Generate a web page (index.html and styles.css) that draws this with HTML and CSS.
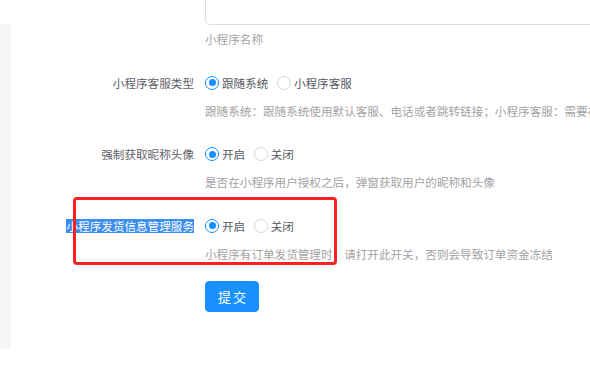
FILE: index.html
```html
<!DOCTYPE html>
<html lang="zh-CN">
<head>
<meta charset="utf-8">
<title>小程序设置</title>
<link rel="stylesheet" href="styles.css">
</head>
<body>
<div class="page">
  <div class="aside"></div>
  <form class="form">
    <div class="item item-input">
      <div class="label"></div>
      <div class="control">
        <div class="input"></div>
        <div class="desc">小程序名称</div>
      </div>
    </div>
    <div class="item">
      <div class="label">小程序客服类型</div>
      <div class="control">
        <div class="radios">
          <span class="radio checked"><span class="dot"></span>跟随系统</span>
          <span class="radio"><span class="dot"></span>小程序客服</span>
        </div>
        <div class="desc">跟随系统：跟随系统使用默认客服、电话或者跳转链接；小程序客服：需要在小程序后台配置客服人员</div>
      </div>
    </div>
    <div class="item">
      <div class="label">强制获取昵称头像</div>
      <div class="control">
        <div class="radios">
          <span class="radio checked"><span class="dot"></span>开启</span>
          <span class="radio"><span class="dot"></span>关闭</span>
        </div>
        <div class="desc">是否在小程序用户授权之后，弹窗获取用户的昵称和头像</div>
      </div>
    </div>
    <div class="item">
      <div class="label"><span class="selected">小程序发货信息管理服务</span></div>
      <div class="control">
        <div class="radios">
          <span class="radio checked"><span class="dot"></span>开启</span>
          <span class="radio"><span class="dot"></span>关闭</span>
        </div>
        <div class="desc">小程序有订单发货管理时，请打开此开关，否则会导致订单资金冻结</div>
      </div>
    </div>
    <div class="actions">
      <button type="button" class="btn">提交</button>
    </div>
  </form>
  <div class="mark"></div>
</div>
</body>
</html>
```

FILE: styles.css
```css
html, body {
  margin: 0;
  padding: 0;
  background: #fff;
}
body {
  width: 590px;
  height: 369px;
  overflow: hidden;
  font-family: "Noto Sans CJK SC", "Noto Sans", sans-serif;
  font-size: 11.6px;
  color: #606266;
}
.page {
  position: relative;
  display: flex;
  align-items: flex-start;
  width: 590px;
  height: 369px;
}
.aside {
  flex: none;
  width: 11px;
  height: 325px;
  margin-top: 24px;
  background: #f6f6f6;
}
.form {
  flex: 1;
  min-width: 0;
  margin: -7px 0 0 0;
}
.item {
  display: flex;
  margin-bottom: 17.5px;
}
.label {
  flex: none;
  width: 194px;
  box-sizing: border-box;
  padding-right: 11px;
  text-align: right;
  line-height: 32px;
  height: 32px;
  color: #5f6168;
  white-space: nowrap;
}
.selected {
  display: inline-block;
  line-height: 14px;
  background: #3b8ef0;
  color: #fff;
}
.control {
  flex: 1;
  min-width: 0;
}
.input {
  width: 420px;
  height: 32px;
  box-sizing: border-box;
  border: 1px solid #dcdcdc;
  border-radius: 4px;
  background: #fff;
}
.desc {
  margin-top: 2px;
  line-height: 20px;
  color: #a3a3a3;
  white-space: nowrap;
}
.item-input .desc {
  margin-top: 4px;
}
.radios {
  display: flex;
  align-items: center;
  height: 32px;
  white-space: nowrap;
}
.radio {
  display: inline-flex;
  align-items: center;
  margin-right: 8.5px;
  color: #555a63;
}
.dot {
  position: relative;
  width: 14px;
  height: 14px;
  box-sizing: border-box;
  border: 1px solid #d9d9d9;
  border-radius: 50%;
  background: #fff;
  margin-right: 3px;
}
.checked .dot {
  border-color: #1890ff;
}
.checked .dot::after {
  content: "";
  position: absolute;
  left: 2.5px;
  top: 2.5px;
  width: 7px;
  height: 7px;
  border-radius: 50%;
  background: #1890ff;
}
.actions {
  padding-left: 194px;
}
.btn {
  width: 54px;
  height: 31px;
  border: 1px solid #1890ff;
  border-radius: 4px;
  background: #1890ff;
  color: #fff;
  font-family: "Noto Sans CJK SC", "Noto Sans", sans-serif;
  font-size: 13px;
  letter-spacing: 2px;
  text-indent: 2px;
  padding: 0;
}
.mark {
  position: absolute;
  left: 73px;
  top: 197px;
  width: 264px;
  height: 68px;
  box-sizing: border-box;
  border: 3px solid #fb1f1f;
  border-radius: 4px;
}
```
